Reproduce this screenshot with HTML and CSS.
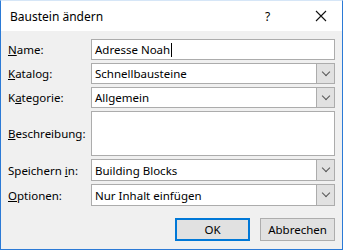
FILE: index.html
```html
<!DOCTYPE html>
<html lang="de">
<head>
  <meta charset="UTF-8">
  <title>Baustein ändern</title>
  <link rel="stylesheet" href="styles.css">
</head>
<body>
  <div class="window">
    <div class="titlebar">
      <span class="title">Baustein ändern</span>
      <span class="help">?</span>
      <svg class="close" width="12" height="12" viewBox="0 0 12 12">
        <path d="M1 1 L11 11 M11 1 L1 11" stroke="#111" stroke-width="1.1" fill="none"/>
      </svg>
    </div>
    <form class="content">
      <div class="grid">
        <label for="name"><u>N</u>ame:</label>
        <div class="field"><span>Adresse Noah</span><span class="caret"></span></div>

        <label><u>K</u>atalog:</label>
        <div class="field select"><span>Schnellbausteine</span><span class="drop"><i></i></span></div>

        <label>K<u>a</u>tegorie:</label>
        <div class="field select"><span>Allgemein</span><span class="drop"><i></i></span></div>

        <label><u>B</u>eschreibung:</label>
        <div class="field area"></div>

        <label>Speichern <u>i</u>n:</label>
        <div class="field select"><span>Building Blocks</span><span class="drop"><i></i></span></div>

        <label><u>O</u>ptionen:</label>
        <div class="field select"><span>Nur Inhalt einfügen</span><span class="drop"><i></i></span></div>
      </div>
      <div class="buttons">
        <button type="button" class="default">OK</button>
        <button type="button">Abbrechen</button>
      </div>
    </form>
  </div>
</body>
</html>
```

FILE: styles.css
```css
* {
  margin: 0;
  padding: 0;
  box-sizing: border-box;
}

body {
  background-color: #ffffff;
  font-family: "Noto Sans", "Open Sans", sans-serif;
  font-size: 11.5px;
  color: #000;
}

.window {
  width: 343px;
  height: 250px;
  border: 1px solid #2b7ad6;
  border-top-color: #d6e6f7;
  background-color: #f0f0f0;
  display: flex;
  flex-direction: column;
}

.titlebar {
  height: 30px;
  background-color: #ffffff;
  display: flex;
  align-items: center;
  padding-left: 9px;
}

.title {
  flex: 1;
  font-size: 12px;
}

.help {
  width: 20px;
  font-size: 12px;
  margin-right: 30px;
}

.close {
  margin-right: 15px;
}

.content {
  padding: 8px 7px 0 7px;
}

.grid {
  display: grid;
  grid-template-columns: 83px 1fr;
  grid-template-rows: 21px 21px 21px 45px 22px 22px;
  row-gap: 3px;
}

label {
  align-self: center;
  white-space: nowrap;
}

label u {
  text-decoration-thickness: 1px;
}

.field {
  background-color: #ffffff;
  border: 1px solid #acacac;
  display: flex;
  align-items: center;
  padding-left: 3px;
}

.caret {
  width: 1px;
  height: 14px;
  background-color: #000;
  margin-left: 1px;
}

.select span:first-child {
  flex: 1;
}

.drop {
  width: 18px;
  height: 100%;
  background-color: #e1e1e1;
  border-left: 1px solid #acacac;
  display: flex;
  align-items: center;
  justify-content: center;
}

.drop i {
  width: 6px;
  height: 6px;
  border-right: 1px solid #555;
  border-bottom: 1px solid #555;
  transform: translateY(-2px) rotate(45deg);
}

.buttons {
  display: flex;
  justify-content: flex-end;
  gap: 10px;
  margin-top: 12px;
}

button {
  width: 75px;
  height: 23px;
  background-color: #e1e1e1;
  border: 1px solid #adadad;
  font-family: inherit;
  font-size: 11.5px;
  color: #000;
}

button.default {
  border: 2px solid #0078d7;
}
```
